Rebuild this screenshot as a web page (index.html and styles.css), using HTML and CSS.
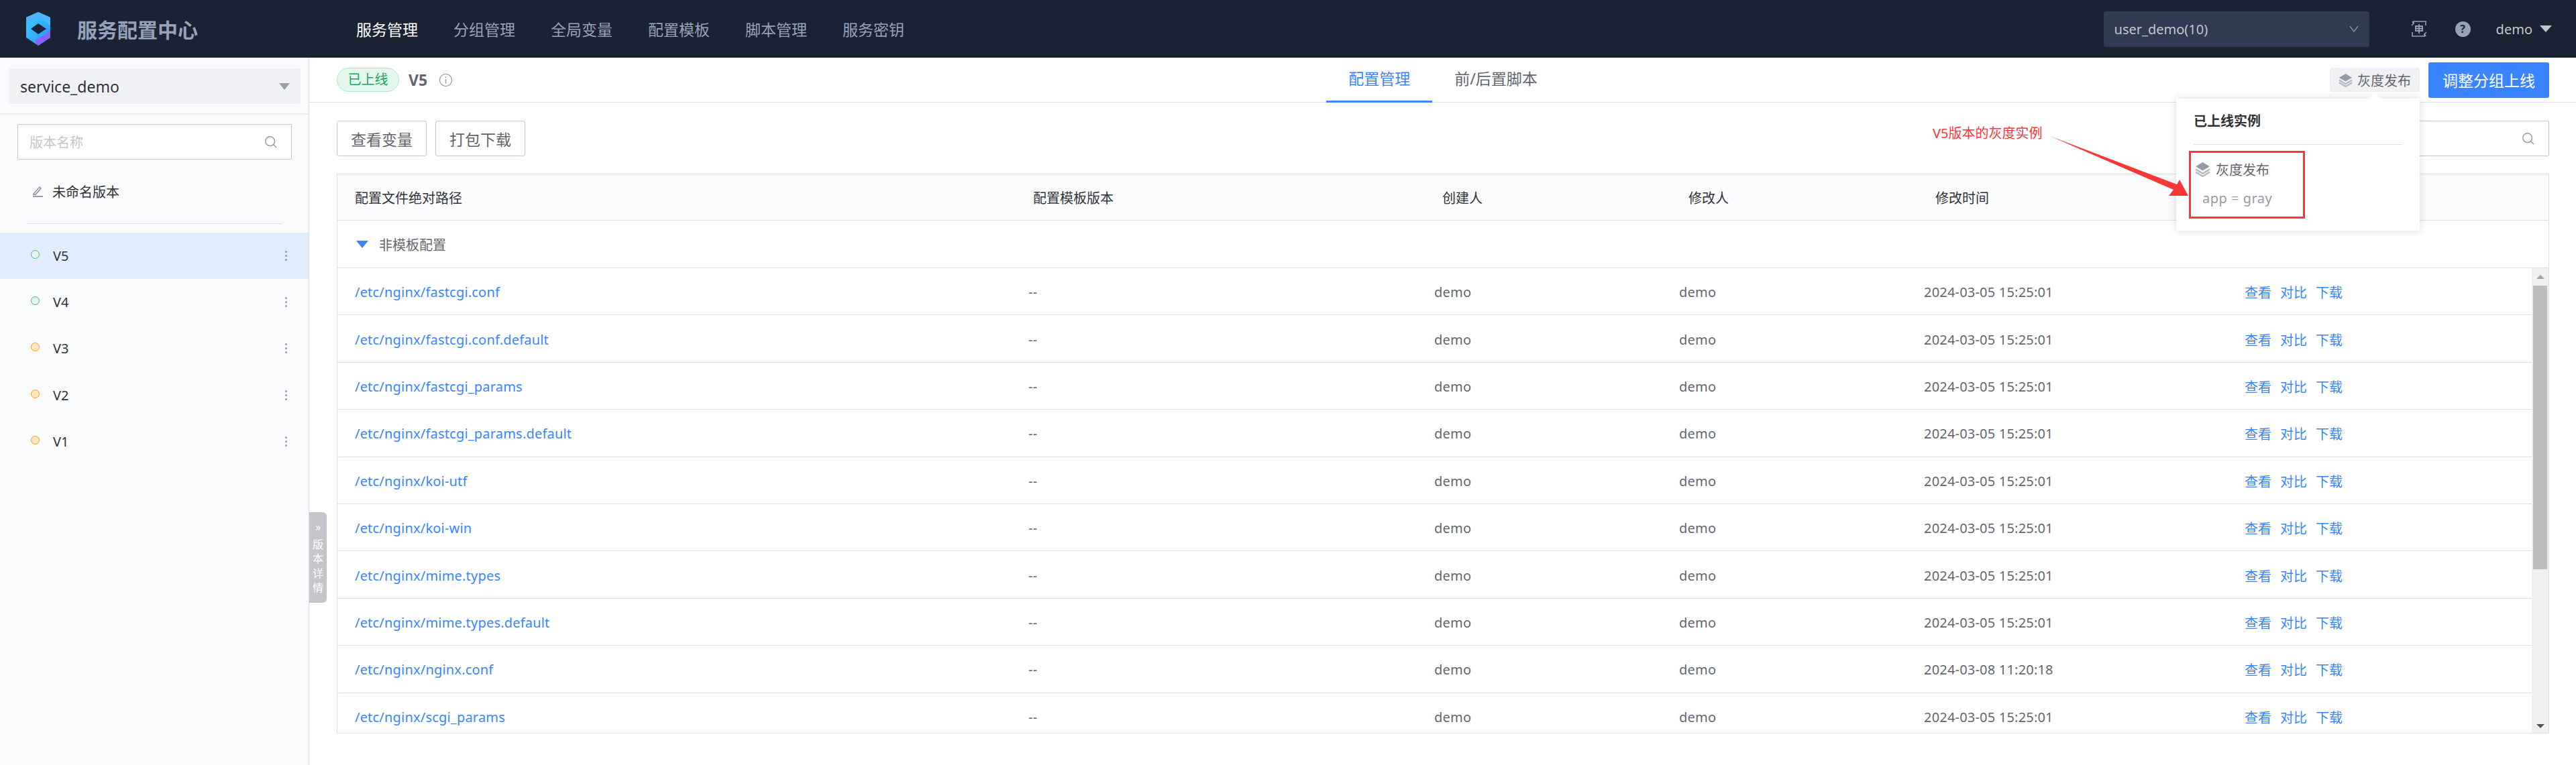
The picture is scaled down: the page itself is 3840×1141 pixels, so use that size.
FILE: index.html
```html
<!DOCTYPE html>
<html lang="zh-CN">
<head>
    <meta charset="UTF-8">
    <title>服务配置中心</title>
    <link rel="stylesheet" href="styles.css">
</head>
<body>
    <div class="app">
        <header class="topbar">
            <div class="brand">
                <svg class="logo" viewBox="0 0 36 50" width="36" height="50">
                    <defs>
                        <linearGradient id="logoBlue" x1="0" y1="0" x2="1" y2="1">
                            <stop offset="0" stop-color="#3fd4ff"/>
                            <stop offset="1" stop-color="#2a8cff"/>
                        </linearGradient>
                    </defs>
                    <path d="M18 0L36 8V38L18 50L0 38V8Z" fill="url(#logoBlue)"/>
                    <path d="M36 28V38L18 50L13 42L30 33Z" fill="#8b62f5"/>
                    <path d="M0 20L18 8L36 20V8L18 0L0 8Z" fill="#4bb5ff"/>
                    <path d="M7 25L18 17L30 25L18 33Z" fill="#1a2233"/>
                </svg>
                <span class="brand-name">服务配置中心</span>
            </div>
            <nav class="nav">
                <a class="nav-item active">服务管理</a>
                <a class="nav-item">分组管理</a>
                <a class="nav-item">全局变量</a>
                <a class="nav-item">配置模板</a>
                <a class="nav-item">脚本管理</a>
                <a class="nav-item">服务密钥</a>
            </nav>
            <div class="topbar-right">
                <div class="biz-select">
                    <span>user_demo(10)</span>
                    <svg viewBox="0 0 14 10" width="14" height="10"><path d="M1 1L7 9L13 1" fill="none" stroke="#7d8aa3" stroke-width="1.6"/></svg>
                </div>
                <svg class="lang-icon" viewBox="0 0 26 26" width="26" height="26">
                    <path d="M5 5V2H23V8M21 21V24H3V18M2 8L5 5L3 2M24 18L21 21L23 24" fill="none" stroke="#96a2b9" stroke-width="1.6"/>
                    <path d="M8 9H18V16H8ZM13 6V20M8 12.5H18" fill="none" stroke="#96a2b9" stroke-width="1.8"/>
                </svg>
                <span class="help-icon">?</span>
                <span class="user-name">demo</span>
                <span class="user-caret"></span>
            </div>
        </header>

        <div class="content">
            <aside class="sidebar">
                <div class="service-wrap">
                    <div class="service-select">
                        <span>service_demo</span>
                        <span class="select-caret"></span>
                    </div>
                </div>
                <div class="version-search">
                    <div class="search-box">
                        <span class="placeholder">版本名称</span>
                        <svg class="search-icon" viewBox="0 0 22 22" width="20" height="20"><circle cx="9.5" cy="9.5" r="7.5" fill="none" stroke="#979ba5" stroke-width="1.6"/><path d="M15 15L20 20" stroke="#979ba5" stroke-width="1.6"/></svg>
                    </div>
                </div>
                <div class="draft">
                    <svg viewBox="0 0 18 18" width="18" height="18"><path d="M2 12L11 2L13 4L5 13H2ZM1 16H16" fill="none" stroke="#979ba5" stroke-width="1.8"/></svg>
                    <span>未命名版本</span>
                </div>
                <div class="version-divider"></div>
                <ul class="version-list">
                    <li class="version active"><i class="dot green"></i><span>V5</span><b class="kebab"></b></li>
                    <li class="version"><i class="dot green"></i><span>V4</span><b class="kebab"></b></li>
                    <li class="version"><i class="dot orange"></i><span>V3</span><b class="kebab"></b></li>
                    <li class="version"><i class="dot orange"></i><span>V2</span><b class="kebab"></b></li>
                    <li class="version"><i class="dot orange"></i><span>V1</span><b class="kebab"></b></li>
                </ul>
            </aside>

            <div class="detail-handle"><span class="handle-arrow">»</span>版本详情</div>

            <main class="main">
                <div class="main-head">
                    <div class="version-info">
                        <span class="status-tag">已上线</span>
                        <span class="version-name">V5</span>
                        <svg viewBox="0 0 22 22" width="21" height="21"><circle cx="11" cy="11" r="9.5" fill="none" stroke="#979ba5" stroke-width="1.3"/><path d="M11 5.5V7.5M11 9.5V16.5" stroke="#979ba5" stroke-width="1.5"/></svg>
                    </div>
                    <div class="tabs">
                        <a class="tab active">配置管理</a>
                        <a class="tab">前/后置脚本</a>
                    </div>
                    <div class="head-actions">
                        <span class="gray-btn">
                            <svg class="layers" viewBox="0 0 22 22" width="21" height="21"><path d="M11 1L21 7L11 13L1 7Z" fill="#979ba5"/><path d="M1 11L11 17L21 11M1 15L11 21L21 15" fill="none" stroke="#b5b8c1" stroke-width="2.4"/></svg>
                            灰度发布
                        </span>
                        <button class="primary-btn">调整分组上线</button>
                    </div>
                </div>

                <div class="main-body">
                    <div class="toolbar">
                        <div class="toolbar-left">
                            <button class="plain-btn">查看变量</button>
                            <button class="plain-btn">打包下载</button>
                        </div>
                        <div class="search-box config-search">
                            <svg class="search-icon" viewBox="0 0 22 22" width="20" height="20"><circle cx="9.5" cy="9.5" r="7.5" fill="none" stroke="#979ba5" stroke-width="1.6"/><path d="M15 15L20 20" stroke="#979ba5" stroke-width="1.6"/></svg>
                        </div>
                    </div>

                    <div class="table">
                        <div class="table-head">
                            <span>配置文件绝对路径</span>
                            <span>配置模板版本</span>
                            <span>创建人</span>
                            <span>修改人</span>
                            <span>修改时间</span>
                        </div>
                        <div class="group-row"><i class="group-caret"></i>非模板配置</div>
                        <div class="table-scroll">
                            <div class="rows">
                                <div class="row"><a class="link">/etc/nginx/fastcgi.conf</a><span>--</span><span>demo</span><span>demo</span><span>2024-03-05 15:25:01</span><span class="ops"><a>查看</a><a>对比</a><a>下载</a></span></div>
                                <div class="row"><a class="link">/etc/nginx/fastcgi.conf.default</a><span>--</span><span>demo</span><span>demo</span><span>2024-03-05 15:25:01</span><span class="ops"><a>查看</a><a>对比</a><a>下载</a></span></div>
                                <div class="row"><a class="link">/etc/nginx/fastcgi_params</a><span>--</span><span>demo</span><span>demo</span><span>2024-03-05 15:25:01</span><span class="ops"><a>查看</a><a>对比</a><a>下载</a></span></div>
                                <div class="row"><a class="link">/etc/nginx/fastcgi_params.default</a><span>--</span><span>demo</span><span>demo</span><span>2024-03-05 15:25:01</span><span class="ops"><a>查看</a><a>对比</a><a>下载</a></span></div>
                                <div class="row"><a class="link">/etc/nginx/koi-utf</a><span>--</span><span>demo</span><span>demo</span><span>2024-03-05 15:25:01</span><span class="ops"><a>查看</a><a>对比</a><a>下载</a></span></div>
                                <div class="row"><a class="link">/etc/nginx/koi-win</a><span>--</span><span>demo</span><span>demo</span><span>2024-03-05 15:25:01</span><span class="ops"><a>查看</a><a>对比</a><a>下载</a></span></div>
                                <div class="row"><a class="link">/etc/nginx/mime.types</a><span>--</span><span>demo</span><span>demo</span><span>2024-03-05 15:25:01</span><span class="ops"><a>查看</a><a>对比</a><a>下载</a></span></div>
                                <div class="row"><a class="link">/etc/nginx/mime.types.default</a><span>--</span><span>demo</span><span>demo</span><span>2024-03-05 15:25:01</span><span class="ops"><a>查看</a><a>对比</a><a>下载</a></span></div>
                                <div class="row"><a class="link">/etc/nginx/nginx.conf</a><span>--</span><span>demo</span><span>demo</span><span>2024-03-08 11:20:18</span><span class="ops"><a>查看</a><a>对比</a><a>下载</a></span></div>
                                <div class="row"><a class="link">/etc/nginx/scgi_params</a><span>--</span><span>demo</span><span>demo</span><span>2024-03-05 15:25:01</span><span class="ops"><a>查看</a><a>对比</a><a>下载</a></span></div>
                            </div>
                            <div class="scrollbar">
                                <i class="scroll-up"></i>
                                <div class="scroll-thumb"></div>
                                <i class="scroll-down"></i>
                            </div>
                        </div>
                    </div>
                </div>
            </main>
        </div>

        <div class="popover">
            <div class="popover-title">已上线实例</div>
            <div class="popover-group">
                <div class="group-name">
                    <svg class="layers" viewBox="0 0 22 22" width="23" height="23"><path d="M11 1L21 7L11 13L1 7Z" fill="#979ba5"/><path d="M1 11L11 17L21 11M1 15L11 21L21 15" fill="none" stroke="#b5b8c1" stroke-width="2.4"/></svg>
                    灰度发布
                </div>
                <div class="group-rule">app = gray</div>
            </div>
        </div>

        <div class="note-text">V5版本的灰度实例</div>
        <svg class="note-arrow" viewBox="0 0 210 92" width="210" height="92">
            <path d="M2 1L191 73L195 66L208 90L179 90L186 81Z" fill="#f83737"/>
        </svg>
    </div>
</body>
</html>
```

FILE: styles.css
```css
* {
    box-sizing: border-box;
}
body {
    margin: 0;
    font-family: "Noto Sans", "Noto Sans CJK SC", sans-serif;
    font-size: 20px;
    color: #63656e;
    background-color: #fff;
}
ul {
    margin: 0;
    padding: 0;
    list-style: none;
}
button {
    font-family: inherit;
    cursor: pointer;
}
.app {
    position: relative;
    display: flex;
    flex-direction: column;
    height: 1141px;
    overflow: hidden;
}

/* top bar */
.topbar {
    display: flex;
    align-items: center;
    flex: none;
    height: 86px;
    padding-left: 40px;
    background-color: #1a2233;
}
.brand {
    display: flex;
    align-items: center;
    width: 491px;
}
.logo {
    flex: none;
    margin-left: -1px;
}
.brand-name {
    margin-left: 40px;
    font-size: 30px;
    font-weight: 700;
    color: #96a2b9;
}
.nav {
    display: flex;
    gap: 53px;
}
.nav-item {
    font-size: 23px;
    color: #96a2b9;
}
.nav-item.active {
    color: #fff;
}
.topbar-right {
    display: flex;
    align-items: center;
    margin-left: auto;
    padding-right: 36px;
}
.biz-select {
    display: flex;
    align-items: center;
    justify-content: space-between;
    width: 396px;
    height: 53px;
    margin-right: 61px;
    padding: 0 16px;
    border-radius: 3px;
    background-color: #303b53;
    color: #c4c6cc;
}
.lang-icon {
    flex: none;
}
.help-icon {
    width: 23px;
    height: 23px;
    margin: 0 38px 0 41px;
    border-radius: 50%;
    background-color: #96a2b9;
    color: #1a2233;
    font-size: 16px;
    font-weight: 700;
    line-height: 23px;
    text-align: center;
}
.user-name {
    color: #c4c6cc;
    font-size: 20px;
}
.user-caret {
    width: 0;
    height: 0;
    margin-left: 11px;
    border-top: 10px solid #c4c6cc;
    border-left: 9px solid transparent;
    border-right: 9px solid transparent;
}

/* left column */
.content {
    display: flex;
    flex: 1;
    min-height: 0;
}
.sidebar {
    flex: none;
    width: 461px;
    border-right: 1px solid #dcdee5;
    background-color: #fafbfd;
}
.service-wrap {
    height: 85px;
    padding: 16px 12px 0 13px;
    border-bottom: 2px solid #eaebf0;
}
.service-select {
    display: flex;
    align-items: center;
    justify-content: space-between;
    height: 53px;
    padding: 0 16px 0 17px;
    border-radius: 3px;
    background-color: #f0f1f5;
    font-size: 23px;
    color: #313238;
}
.select-caret {
    width: 0;
    height: 0;
    border-top: 10px solid #979ba5;
    border-left: 8px solid transparent;
    border-right: 8px solid transparent;
}
.version-search {
    padding: 14px 25px 0 26px;
}
.search-box {
    display: flex;
    align-items: center;
    justify-content: space-between;
    height: 53px;
    padding: 0 20px 0 17px;
    border: 1px solid #c4c6cc;
    border-radius: 2px;
    background-color: #fff;
}
.placeholder {
    color: #c4c6cc;
}
.search-icon {
    flex: none;
}
.draft {
    display: flex;
    align-items: center;
    gap: 12px;
    height: 95px;
    padding-left: 48px;
    color: #313238;
}
.version-divider {
    height: 1px;
    margin: 0 39px 0 40px;
    background-color: #dcdee5;
}
.version-list {
    margin-top: 13px;
}
.version {
    display: flex;
    align-items: center;
    height: 69.2px;
    padding: 0 32px 0 46px;
    color: #313238;
}
.version.active {
    background-color: #e1ecff;
}
.dot {
    width: 13px;
    height: 13px;
    margin: 0 20px 4px 0;
    border-radius: 50%;
}
.dot.green {
    border: 1px solid #3fc06d;
    background-color: #e5f6ea;
}
.dot.orange {
    border: 1px solid #ff9c01;
    background-color: #ffe8c3;
}
.kebab {
    width: 3px;
    height: 3px;
    margin-left: auto;
    border-radius: 50%;
    background-color: #979ba5;
    box-shadow: 0 -6px 0 #979ba5, 0 6px 0 #979ba5;
}
.detail-handle {
    position: absolute;
    top: 764px;
    left: 461px;
    width: 26px;
    height: 135px;
    padding-top: 12px;
    border-radius: 0 6px 6px 0;
    background-color: #c4c6cc;
    color: #fff;
    font-size: 16px;
    line-height: 21.5px;
    text-align: center;
}
.handle-arrow {
    display: block;
    margin-bottom: 4px;
}

/* right column */
.main {
    flex: 1;
    min-width: 0;
}
.main-head {
    display: grid;
    grid-template-columns: 1fr auto 1fr;
    align-items: stretch;
    height: 67px;
    padding: 0 40px 0 41px;
    border-bottom: 1px solid #dcdee5;
}
.version-info {
    display: flex;
    align-items: center;
    padding-bottom: 1px;
}
.status-tag {
    width: 93px;
    height: 36px;
    margin-right: 14px;
    border: 1px solid #a9e8c8;
    border-radius: 18px;
    background-color: #e4f7ed;
    color: #14a568;
    line-height: 33px;
    text-align: center;
}
.version-name {
    margin-right: 17px;
    font-size: 23px;
    font-weight: 700;
}
.tabs {
    display: flex;
}
.tab {
    height: 67px;
    padding: 0 33px;
    font-size: 23px;
    line-height: 62px;
}
.tab.active {
    border-bottom: 3px solid #3a84ff;
    color: #3a84ff;
}
.head-actions {
    display: flex;
    align-items: center;
    justify-content: flex-end;
    gap: 13px;
    padding-bottom: 1px;
}
.gray-btn {
    display: flex;
    align-items: center;
    gap: 7px;
    height: 36px;
    padding: 0 13px;
    border-radius: 3px;
    background-color: #f0f1f5;
}
.layers {
    flex: none;
}
.primary-btn {
    width: 180px;
    height: 53px;
    padding: 0;
    border: none;
    border-radius: 3px;
    background-color: #3a84ff;
    color: #fff;
    font-size: 23px;
}
.main-body {
    padding: 27px 40px 0 41px;
}
.toolbar {
    display: flex;
    align-items: center;
    justify-content: space-between;
}
.toolbar-left {
    display: flex;
    gap: 13px;
}
.plain-btn {
    width: 134px;
    height: 53px;
    padding: 0;
    border: 1px solid #c4c6cc;
    border-radius: 3px;
    background-color: #fff;
    color: #63656e;
    font-size: 23px;
}
.config-search {
    justify-content: flex-end;
    width: 500px;
    padding-right: 20px;
}
.table {
    height: 835px;
    margin-top: 26px;
    border: 1px solid #dcdee5;
}
.table-head {
    display: grid;
    grid-template-columns: 1011px 610px 367px 368px 1fr;
    align-items: center;
    height: 69px;
    padding-left: 26px;
    border-bottom: 1px solid #dcdee5;
    background-color: #fafbfd;
    color: #313238;
}
.group-row {
    display: flex;
    align-items: center;
    height: 71px;
    padding-left: 28px;
    border-bottom: 1px solid #dcdee5;
}
.group-caret {
    width: 0;
    height: 0;
    margin-right: 16px;
    border-top: 11px solid #3a84ff;
    border-left: 9px solid transparent;
    border-right: 9px solid transparent;
}
.table-scroll {
    display: flex;
    height: 693px;
}
.rows {
    flex: 1;
    min-width: 0;
    overflow: hidden;
}
.row {
    display: grid;
    grid-template-columns: 1004px 605px 365px 365px 478px 1fr;
    align-items: center;
    height: 70.4px;
    padding: 2px 0 0 26px;
    border-bottom: 1px solid #dcdee5;
    letter-spacing: 0.2px;
}
.link,
.ops a {
    color: #3a84ff;
}
.ops {
    display: flex;
    gap: 13px;
    letter-spacing: 0;
}
.scrollbar {
    display: flex;
    flex-direction: column;
    align-items: center;
    flex: none;
    width: 25px;
    padding-top: 10px;
    background-color: #f0f0f0;
}
.scroll-up {
    width: 0;
    height: 0;
    border-bottom: 6px solid #a3a3a3;
    border-left: 6px solid transparent;
    border-right: 6px solid transparent;
}
.scroll-thumb {
    flex: none;
    width: 21px;
    height: 423px;
    margin-top: 10px;
    background-color: #bdbdbd;
}
.scroll-down {
    width: 0;
    height: 0;
    margin-top: auto;
    margin-bottom: 7px;
    border-top: 6px solid #505050;
    border-left: 6px solid transparent;
    border-right: 6px solid transparent;
}

/* popover and red notes */
.popover {
    position: absolute;
    top: 147px;
    left: 3244px;
    width: 363px;
    height: 197px;
    padding: 20px 26px 0;
    background-color: #fff;
    box-shadow: 0 0 12px rgba(0, 0, 0, 0.14);
}
.popover::before {
    content: "";
    position: absolute;
    top: -6px;
    left: 289px;
    width: 13px;
    height: 13px;
    background-color: #fff;
    transform: rotate(45deg);
}
.popover-title {
    height: 49px;
    border-bottom: 1px solid #dcdee5;
    color: #313238;
    font-weight: 700;
    line-height: 28px;
}
.popover-group {
    width: 173px;
    height: 101px;
    margin: 9px 0 0 -7px;
    padding: 12px 0 0 6px;
    border: 3px solid #f83737;
}
.group-name {
    display: flex;
    align-items: center;
    gap: 8px;
    height: 24px;
}
.group-rule {
    margin: 20px 0 0 11px;
    color: #979ba5;
    line-height: 24px;
    letter-spacing: 0.5px;
}
.note-text {
    position: absolute;
    top: 185px;
    left: 2881px;
    color: #f83737;
    line-height: 28px;
}
.note-arrow {
    position: absolute;
    top: 202px;
    left: 3054px;
}
```
